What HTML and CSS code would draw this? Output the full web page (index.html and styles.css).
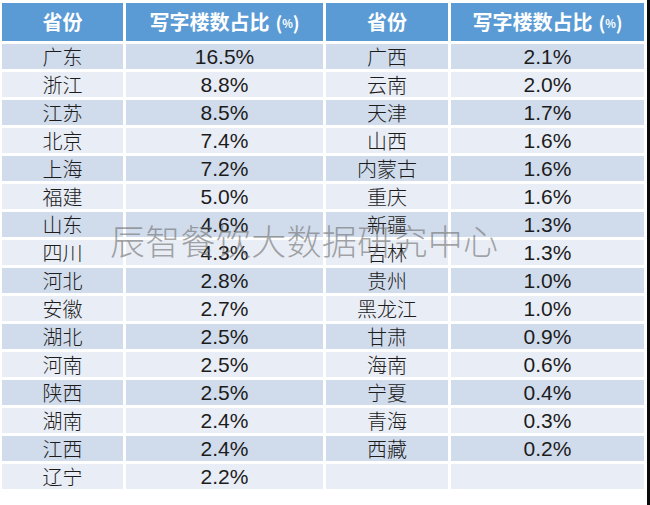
FILE: index.html
```html
<!DOCTYPE html>
<html lang="zh-CN">
<head>
<meta charset="utf-8">
<title>写字楼数占比</title>
<link rel="stylesheet" href="styles.css">
</head>
<body>
<div class="page">
  <table class="data">
    <colgroup>
      <col class="c-prov"><col class="c-val"><col class="c-prov2"><col class="c-val2">
    </colgroup>
    <thead>
      <tr>
        <th>省份</th>
        <th>写字楼数占比<span class="paren">(<span class="pct">%</span>)</span></th>
        <th>省份</th>
        <th>写字楼数占比<span class="paren">(<span class="pct">%</span>)</span></th>
      </tr>
    </thead>
    <tbody>
      <tr><td class="name">广东</td><td class="num">16.5%</td><td class="name">广西</td><td class="num">2.1%</td></tr>
      <tr><td class="name">浙江</td><td class="num">8.8%</td><td class="name">云南</td><td class="num">2.0%</td></tr>
      <tr><td class="name">江苏</td><td class="num">8.5%</td><td class="name">天津</td><td class="num">1.7%</td></tr>
      <tr><td class="name">北京</td><td class="num">7.4%</td><td class="name">山西</td><td class="num">1.6%</td></tr>
      <tr><td class="name">上海</td><td class="num">7.2%</td><td class="name">内蒙古</td><td class="num">1.6%</td></tr>
      <tr><td class="name">福建</td><td class="num">5.0%</td><td class="name">重庆</td><td class="num">1.6%</td></tr>
      <tr><td class="name">山东</td><td class="num">4.6%</td><td class="name">新疆</td><td class="num">1.3%</td></tr>
      <tr><td class="name">四川</td><td class="num">4.3%</td><td class="name">吉林</td><td class="num">1.3%</td></tr>
      <tr><td class="name">河北</td><td class="num">2.8%</td><td class="name">贵州</td><td class="num">1.0%</td></tr>
      <tr><td class="name">安徽</td><td class="num">2.7%</td><td class="name">黑龙江</td><td class="num">1.0%</td></tr>
      <tr><td class="name">湖北</td><td class="num">2.5%</td><td class="name">甘肃</td><td class="num">0.9%</td></tr>
      <tr><td class="name">河南</td><td class="num">2.5%</td><td class="name">海南</td><td class="num">0.6%</td></tr>
      <tr><td class="name">陕西</td><td class="num">2.5%</td><td class="name">宁夏</td><td class="num">0.4%</td></tr>
      <tr><td class="name">湖南</td><td class="num">2.4%</td><td class="name">青海</td><td class="num">0.3%</td></tr>
      <tr><td class="name">江西</td><td class="num">2.4%</td><td class="name">西藏</td><td class="num">0.2%</td></tr>
      <tr><td class="name">辽宁</td><td class="num">2.2%</td><td class="name"></td><td class="num"></td></tr>
    </tbody>
  </table>
  <div class="watermark">辰智餐饮大数据研究中心</div>
</div>
</body>
</html>
```
FILE: styles.css
```css
html, body {
  margin: 0;
  padding: 0;
  background: #ffffff;
}

.page {
  position: relative;
  width: 647px;
  height: 505px;
  border-right: 3px solid #0a0a0a;
  overflow: hidden;
  font-family: "Noto Sans CJK SC", "Liberation Sans", sans-serif;
}

.data {
  border-collapse: separate;
  border-spacing: 3px;
  margin-left: -1px;
  table-layout: fixed;
}

.c-prov { width: 121px; }
.c-val { width: 197px; }
.c-prov2 { width: 122px; }
.c-val2 { width: 193px; }

.data th {
  height: 38px;
  padding: 0;
  background: #5b9bd5;
  color: #ffffff;
  font-family: "Noto Sans CJK SC", sans-serif;
  font-weight: 700;
  font-size: 20px;
  text-align: center;
  vertical-align: middle;
  line-height: 1;
}

.paren {
  margin-left: 6px;
  font-size: 18px;
  font-weight: 700;
}

.pct {
  font-size: 11px;
  vertical-align: 2px;
}

.data td {
  height: 25px;
  padding: 0;
  text-align: center;
  vertical-align: middle;
  line-height: 1;
  color: #1c1c1c;
}

.data tbody tr:nth-child(odd) td {
  background: #d0dbeb;
}

.data tbody tr:nth-child(even) td {
  background: #e9edf5;
}

.name {
  font-family: "Noto Sans CJK SC", sans-serif;
  font-weight: 300;
  font-size: 20px;
}

.num {
  font-family: "Liberation Sans", Arial, sans-serif;
  font-size: 21px;
}

.watermark {
  position: absolute;
  left: 110px;
  top: 221px;
  font-family: "Noto Sans CJK SC", sans-serif;
  font-weight: 300;
  font-size: 35px;
  line-height: 1.1;
  letter-spacing: 0.3px;
  color: rgba(110, 110, 110, 0.6);
  white-space: nowrap;
}
```
